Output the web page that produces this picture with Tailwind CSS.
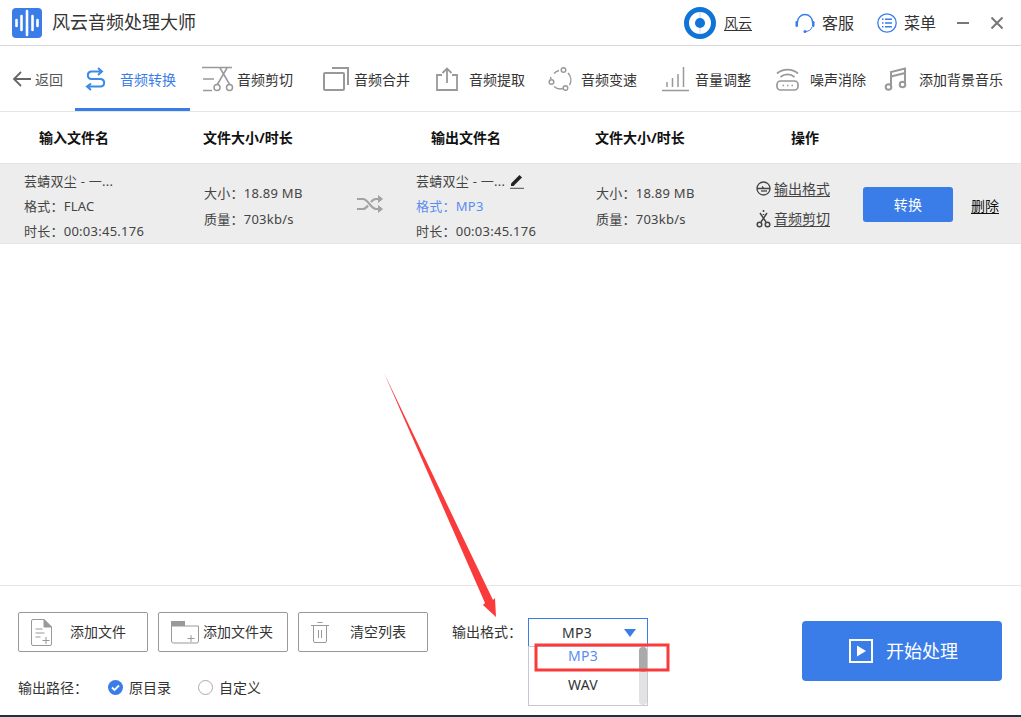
<!DOCTYPE html>
<html lang="zh-CN">
<head>
    <meta charset="UTF-8">
    <title>风云音频处理大师</title>
    <script src="https://cdn.jsdelivr.net/npm/@tailwindcss/browser@4"></script>
</head>
<body class="relative flex flex-col w-[1021px] h-[717px] overflow-hidden bg-white text-[#333] font-['Noto_Sans','Noto_Sans_CJK_SC',sans-serif]">

    <!-- title bar -->
    <header class="flex items-center shrink-0 h-[46px] pl-3 border-b border-[#d9d9d9]">
        <svg class="w-[30px] h-[30px]" viewBox="0 0 30 30">
            <rect width="30" height="30" rx="4" fill="#3a7ce8"/>
            <path d="M4.500 12v6M9.500 8v14M15 3v24M20.500 8v14M25.500 12v6" stroke="#fff" stroke-width="2.600" stroke-linecap="round" fill="none"/>
        </svg>
        <span class="ml-[10px] text-[18px]">风云音频处理大师</span>
        <div class="ml-auto flex items-center h-full">
            <svg class="w-8 h-8" viewBox="0 0 32 32">
                <circle cx="16" cy="16" r="13.500" fill="none" stroke="#0f74d6" stroke-width="5"/>
                <circle cx="16" cy="16" r="5" fill="#0f74d6"/>
                <path d="M16 5v6M16 21v6" stroke="#bcd8f4" stroke-width="1"/>
            </svg>
            <span class="ml-2 text-sm underline underline-offset-2">风云</span>
            <svg class="ml-[43px] w-5 h-5" viewBox="0 0 20 20" fill="none">
                <path d="M2.500 10V9a7.500 7.500 0 0 1 15 0v1" stroke="#3a7ce8" stroke-width="1.300"/>
                <rect x="0.500" y="8" width="2.500" height="6" rx="1.200" fill="#3a7ce8"/>
                <rect x="17" y="8" width="2.500" height="6" rx="1.200" fill="#3a7ce8"/>
                <path d="M17 14c-1 3-3 4-6 4.500" stroke="#3a7ce8" stroke-width="1"/>
                <circle cx="10" cy="18.500" r="1.500" fill="#3a7ce8"/>
            </svg>
            <span class="ml-[7px] text-base">客服</span>
            <svg class="ml-[23px] w-5 h-5" viewBox="0 0 20 20" fill="none" stroke="#3a7ce8">
                <circle cx="10" cy="10" r="9.200" stroke-width="1.300"/>
                <path d="M8 6.300h7M8 10h7M8 13.700h7M5 6.300h1.500M5 10h1.500M5 13.700h1.500" stroke-width="1.500"/>
            </svg>
            <span class="ml-[7px] text-base">菜单</span>
            <svg class="ml-5 w-[14px] h-[14px]" viewBox="0 0 14 14"><path d="M1 7h12" stroke="#777" stroke-width="2"/></svg>
            <svg class="ml-[21px] mr-[18px] w-3 h-3" viewBox="0 0 12 12"><path d="M0.500 0.500l11 11M11.500 0.500l-11 11" stroke="#777" stroke-width="2"/></svg>
        </div>
    </header>

    <!-- tool nav -->
    <nav class="flex items-center shrink-0 h-[66px] border-b border-[#e6e6e6] text-sm leading-none">
        <div class="flex items-center w-[75px] h-full pl-3 text-[#555]">
            <svg class="w-5 h-4" viewBox="0 0 20 16" fill="none" stroke="#666" stroke-width="1.800"><path d="M19 8H2M9 1L2 8l7 7"/></svg>
            <span class="ml-[3px] mt-[2px]">返回</span>
        </div>
        <div class="relative flex items-center w-[115px] h-full pl-[10px] text-[#3a7ce8]">
            <svg class="w-[35px] h-6 shrink-0" viewBox="0 0 35 24" fill="none" stroke="#3a8ce8" stroke-width="2">
                <path d="M13 1l4 3.500-4 3.500M17 4.500H6a3.800 3.800 0 0 0 0 7.500h10a3.800 3.800 0 0 1 0 7.500H2M6 16.500l-4 3 4 3.500"/>
            </svg>
            <span class="mt-[2px]">音频转换</span>
            <div class="absolute left-0 right-0 bottom-0 h-[3px] bg-[#3a7ce8]"></div>
        </div>
        <div class="flex items-center ml-3 w-[121px] h-full">
            <svg class="w-[35px] h-[26px] shrink-0" viewBox="0 0 35 26" fill="none" stroke="#999" stroke-width="1.500">
                <path d="M0 1.500h30M1 13h11M1 24.500h9M18 2l10 17M25 2L15 19"/>
                <circle cx="15" cy="21.500" r="3"/><circle cx="27.500" cy="21.500" r="3"/>
            </svg>
            <span class="mt-[2px]">音频剪切</span>
        </div>
        <div class="flex items-center w-[113px] h-full">
            <svg class="w-[31px] h-6 shrink-0" viewBox="0 0 31 24" fill="none" stroke="#999" stroke-width="2">
                <rect x="1" y="6" width="20" height="17" rx="1"/><path d="M9 1h16v17"/>
            </svg>
            <span class="mt-[2px]">音频合并</span>
        </div>
        <div class="flex items-center w-[112px] h-full">
            <svg class="w-[33px] h-6 shrink-0" viewBox="0 0 33 24" fill="none" stroke="#999" stroke-width="1.800">
                <path d="M6 8H1v15h20V8h-5M11 16V1.500M6.500 6L11 1.500 15.500 6"/>
            </svg>
            <span class="mt-[2px]">音频提取</span>
        </div>
        <div class="flex items-center w-[114px] h-full">
            <svg class="w-[33px] h-6 shrink-0" viewBox="0 0 33 24" fill="none" stroke="#999" stroke-width="1.500">
                <path d="M6 6.500A10 10 0 0 1 11 3.500M20 6a10 10 0 0 1 1.500 12M15 21.500a10 10 0 0 1-9-2M2.500 12a10 10 0 0 1 .5-2"/>
                <circle cx="15.500" cy="3" r="2.300"/><circle cx="3.500" cy="15" r="2.300"/><circle cx="17.500" cy="21" r="2.300"/>
            </svg>
            <span class="mt-[2px]">音频变速</span>
        </div>
        <div class="flex items-center w-[114px] h-full">
            <svg class="w-[33px] h-[26px] shrink-0" viewBox="0 0 33 26" fill="none" stroke="#999" stroke-width="1.500">
                <path d="M0 24.500h27M5 21v-5M10.500 21V12M16 21V8M21.500 21V1"/>
            </svg>
            <span class="mt-[2px]">音量调整</span>
        </div>
        <div class="flex items-center w-[108px] h-full">
            <svg class="w-[34px] h-6 shrink-0" viewBox="0 0 34 24" fill="none" stroke="#999" stroke-width="1.700">
                <path d="M1 6.500a16 16 0 0 1 21 0M4.500 10a10.500 10.500 0 0 1 14 0"/>
                <rect x="1" y="14" width="21" height="9" rx="3.500"/>
                <path d="M6.500 18.500h1.500M11 18.500h1.500M15.500 18.500h1.500"/>
            </svg>
            <span class="mt-[2px]">噪声消除</span>
        </div>
        <div class="flex items-center h-full">
            <svg class="w-[35px] h-6 shrink-0" viewBox="0 0 35 24" fill="none" stroke="#999" stroke-width="2">
                <path d="M7 20V5l14-3.500V17M7 9.500l14-3.500"/>
                <circle cx="4.500" cy="20" r="2.800"/><circle cx="18.500" cy="17.500" r="2.800"/>
            </svg>
            <span class="mt-[2px] whitespace-nowrap">添加背景音乐</span>
        </div>
    </nav>

    <!-- list header -->
    <div class="flex items-center shrink-0 h-[51px] text-sm font-bold text-[#111]">
        <span class="ml-[39px] w-[164px]">输入文件名</span>
        <span class="w-[228px]">文件大小/时长</span>
        <span class="w-[164px]">输出文件名</span>
        <span class="w-[196px]">文件大小/时长</span>
        <span>操作</span>
    </div>

    <!-- file row -->
    <div class="flex items-center shrink-0 h-[81px] bg-[#ededed] border-y border-[#e6e6e6] text-[13px] tracking-[0.25px] text-[#444]">
        <div class="ml-6 mt-[5px] w-[180px] leading-[25px]">
            <p>芸蜻双尘 - 一...</p>
            <p>格式：FLAC</p>
            <p>时长：00:03:45.176</p>
        </div>
        <div class="w-[152px] mt-[4px] leading-[26px]">
            <p>大小：18.89 MB</p>
            <p>质量：703kb/s</p>
        </div>
        <svg class="w-[28px] h-5 mr-8" viewBox="0 0 28 20" fill="none" stroke="#a3a3a3" stroke-width="2.200">
            <path d="M1 5h6c5 0 8 10 13 10h4M1 15h6c2 0 3.500-1.500 5-3.500M15 8c1.500-2 3-3 5-3h4"/>
            <path d="M22 1.500l4.500 3.500-4.500 3.500M22 11.500l4.500 3.500-4.500 3.500" fill="#a3a3a3" stroke-width="1"/>
        </svg>
        <div class="w-[180px] mt-[5px] leading-[25px]">
            <div class="flex items-center">
                <span>芸蜻双尘 - 一...</span>
                <svg class="ml-[5px] w-[14px] h-4" viewBox="0 0 14 16">
                    <path d="M1 10.500L9.500 2l2.500 2.500L3.500 13H1z" fill="#222"/>
                    <path d="M0 15.300h14" stroke="#222" stroke-width="0.800"/>
                </svg>
            </div>
            <p class="text-[#5b8def]">格式：MP3</p>
            <p>时长：00:03:45.176</p>
        </div>
        <div class="w-[160px] mt-[4px] leading-[26px]">
            <p>大小：18.89 MB</p>
            <p>质量：703kb/s</p>
        </div>
        <div class="w-[107px] flex flex-col gap-[10px] text-sm tracking-normal">
            <div class="flex items-center">
                <svg class="w-[15px] h-[15px] shrink-0" viewBox="0 0 15 15" fill="none" stroke="#444" stroke-width="1.300">
                    <circle cx="7.500" cy="7.500" r="6.500"/><path d="M1 7.500h7l-2-2M14 7.500H8"/><path d="M5 10h6"/>
                </svg>
                <span class="ml-[3px] underline underline-offset-2 leading-5">输出格式</span>
            </div>
            <div class="flex items-center">
                <svg class="w-[15px] h-[18px] shrink-0" viewBox="0 0 15 18" fill="none" stroke="#444" stroke-width="1.500">
                    <path d="M7.500 0v2M7.500 4v1M4 3l6 9M11 3L5 12"/>
                    <circle cx="3.500" cy="14.500" r="2.300"/><circle cx="11.500" cy="14.500" r="2.300"/>
                </svg>
                <span class="ml-[3px] underline underline-offset-2 leading-5">音频剪切</span>
            </div>
        </div>
        <button class="w-[90px] h-[35px] mt-[2px] bg-[#3a7ce8] text-white rounded-[3px] text-sm">转换</button>
        <span class="ml-[18px] mt-[4px] text-sm tracking-normal text-[#111] underline underline-offset-2">删除</span>
    </div>

    <div class="flex-1"></div>

    <!-- bottom panel -->
    <div class="relative flex items-start shrink-0 h-[132px] border-t border-[#e6e6e6] border-b-2 border-b-[#1d3242] pl-[18px] pt-[26px] text-sm">
        <div class="w-[434px] shrink-0">
            <div class="flex items-center gap-[10px]">
                <button class="flex items-center w-[130px] h-10 border border-[#999] rounded-[2px] pl-[12px]">
                    <svg class="w-[21px] h-[27px]" viewBox="0 0 21 27" fill="none" stroke="#999" stroke-width="1">
                        <path d="M13 .5H2A1.500 1.500 0 0 0 .5 2v23A1.500 1.500 0 0 0 2 26.500h17a1.500 1.500 0 0 0 1.500-1.500V8z"/>
                        <path d="M13 .5L20.500 8H13z" fill="#999"/>
                        <path d="M4.500 10h7M4.500 14h9M4.500 18h5M15 18v7M11.500 21.500h7"/>
                    </svg>
                    <span class="ml-[18px]">添加文件</span>
                </button>
                <button class="flex items-center w-[130px] h-10 border border-[#999] rounded-[2px] pl-[12px]">
                    <svg class="w-[28px] h-[23px]" viewBox="0 0 28 23" fill="none" stroke="#999" stroke-width="1">
                        <path d="M.5 5h27v15a2 2 0 0 1-2 2H2.500a2 2 0 0 1-2-2z"/>
                        <path d="M0 0h14v5H0z" fill="#999" stroke="none"/>
                        <path d="M20 14v7M16.500 17.500h7"/>
                    </svg>
                    <span class="ml-[4px]">添加文件夹</span>
                </button>
                <button class="flex items-center w-[130px] h-10 border border-[#999] rounded-[2px] pl-[12px]">
                    <svg class="w-[18px] h-[21px]" viewBox="0 0 18 21" fill="none" stroke="#999" stroke-width="1">
                        <path d="M0 3.500h18M6.500 .5h5M2.500 3.500V19a1.500 1.500 0 0 0 1.500 1.500h10a1.500 1.500 0 0 0 1.500-1.500V3.500M7.500 8v8M10.500 8v8"/>
                    </svg>
                    <span class="ml-[21px]">清空列表</span>
                </button>
            </div>
            <div class="flex items-center mt-[28px] leading-none">
                <span>输出路径：</span>
                <svg class="ml-5 w-[15px] h-[15px]" viewBox="0 0 15 15">
                    <circle cx="7.500" cy="7.500" r="7.500" fill="#3a7ce8"/>
                    <path d="M4 7.500l2.500 2.500L11 5.500" fill="none" stroke="#fff" stroke-width="1.800"/>
                </svg>
                <span class="ml-[6px]">原目录</span>
                <span class="ml-[27px] w-[15px] h-[15px] rounded-full border border-[#aaa]"></span>
                <span class="ml-[6px]">自定义</span>
            </div>
        </div>
        <span class="w-[76px] shrink-0 h-10 leading-10">输出格式：</span>
        <div class="mt-[6px] shrink-0 flex items-center w-[120px] h-[29px] border border-[#3a7ce8] tracking-[0.25px]">
            <span class="ml-[33px]">MP3</span>
            <svg class="ml-auto mr-[11px] w-3 h-2" viewBox="0 0 12 8"><path d="M0 0h12L6 8z" fill="#3a7ce8"/></svg>
        </div>
        <button class="flex items-center pl-[47px] ml-[154px] w-[200px] h-[60px] mt-[9px] shrink-0 bg-[#3a7ce8] rounded-[4px] text-white text-lg">
            <svg class="w-6 h-6" viewBox="0 0 24 24" fill="none" stroke="#fff" stroke-width="2">
                <rect x="1" y="1" width="22" height="22"/><path d="M8 6.500L17 12l-9 5.500z" fill="#fff" stroke="none"/>
            </svg>
            <span class="ml-[13px]">开始处理</span>
        </button>

        <!-- opened dropdown -->
        <div class="absolute left-[528px] top-[60px] w-[120px] h-[60px] border border-[#c8c8d4] bg-white flex flex-col items-center pr-[10px] tracking-[0.25px]">
            <span class="-mt-[3px] leading-[24px] text-[#5b8def]">MP3</span>
            <span class="mt-[5px] leading-[24px]">WAV</span>
            <div class="absolute right-0 top-0 bottom-0 w-2 rounded-full bg-[#e2e2e2]">
                <div class="h-[25px] rounded-full bg-[#aaa]"></div>
            </div>
        </div>
    </div>

    <!-- red annotation drawn over the screenshot -->
    <svg class="absolute inset-0 w-[1021px] h-[717px] pointer-events-none" viewBox="0 0 1021 717" fill="none">
        <path d="M384 373L493 600l2-2 1 19-13-12 2-2z" fill="#f93b3b"/>
        <rect x="536" y="645" width="132" height="25" stroke="#f93b3b" stroke-width="3"/>
    </svg>
</body>
</html>
